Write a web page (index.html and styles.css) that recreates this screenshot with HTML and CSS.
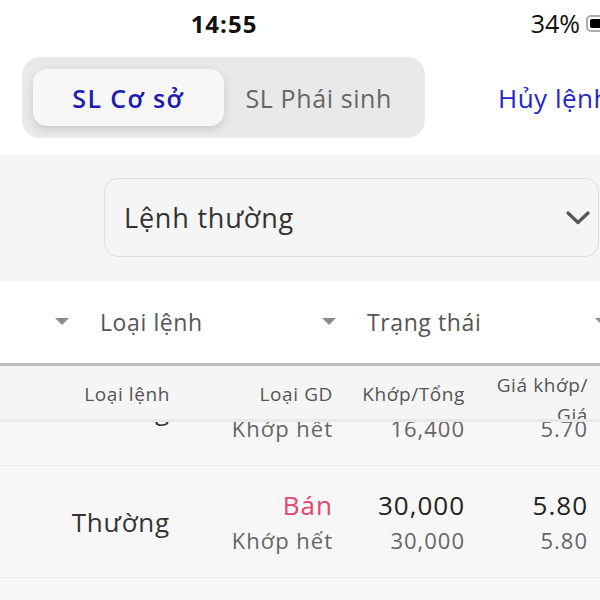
FILE: index.html
```html
<!DOCTYPE html>
<html lang="vi">
<head>
<meta charset="utf-8">
<link rel="stylesheet" href="styles.css">
</head>
<body>
<div class="screen">
  <div class="status">
    <div class="time">14:55</div>
    <div class="battery-area">
      <span class="pct">34%</span>
      <span class="battery"><span class="battery-fill"></span></span>
    </div>
  </div>

  <div class="topbar">
    <div class="segment">
      <div class="seg active">SL Cơ sở</div>
      <div class="seg">SL Phái sinh</div>
    </div>
    <div class="cancel">Hủy lệnh</div>
  </div>

  <div class="filter-section">
    <div class="dropdown">
      <span class="dd-label">Lệnh thường</span>
      <svg class="chev" width="24" height="14" viewBox="0 0 24 14"><path d="M2 2 L12 11.5 L22 2" fill="none" stroke="#555" stroke-width="3.2" stroke-linecap="round" stroke-linejoin="round"/></svg>
    </div>
  </div>

  <div class="filter-row">
    <span class="caret c1"></span>
    <span class="f-label l1">Loại lệnh</span>
    <span class="caret c2"></span>
    <span class="f-label l2">Trạng thái</span>
    <span class="caret c3"></span>
  </div>

  <div class="thead">
    <div class="th col1">Loại lệnh</div>
    <div class="th col2">Loại GD</div>
    <div class="th col3">Khớp/Tổng</div>
    <div class="th col4 two">Giá khớp/<br>Giá</div>
  </div>

  <div class="tbody">
    <div class="row first">
      <div class="col1 type">Thường</div>
      <div class="col2 cell"><span class="main buy">Mua</span><span class="sub">Khớp hết</span></div>
      <div class="col3 cell"><span class="main">16,400</span><span class="sub">16,400</span></div>
      <div class="col4 cell"><span class="main">5.70</span><span class="sub">5.70</span></div>
    </div>
    <div class="row">
      <div class="col1 type">Thường</div>
      <div class="col2 cell"><span class="main sell">Bán</span><span class="sub">Khớp hết</span></div>
      <div class="col3 cell"><span class="main">30,000</span><span class="sub">30,000</span></div>
      <div class="col4 cell"><span class="main">5.80</span><span class="sub">5.80</span></div>
    </div>
  </div>
</div>
</body>
</html>
```

FILE: styles.css
```css
* { box-sizing: border-box; }
html, body { margin: 0; padding: 0; }
body {
  width: 600px;
  height: 600px;
  overflow: hidden;
  background: #f7f7f7;
  font-family: "Open Sans", "Noto Sans", sans-serif;
  color: #333;
}
.screen { width: 600px; height: 600px; overflow: hidden; display: flex; flex-direction: column; }

.status {
  height: 46px;
  flex: none;
  background: #fff;
  display: flex;
  align-items: center;
}
.time {
  width: 448px;
  text-align: center;
  font-weight: 700;
  font-size: 24px;
  color: #111;
  letter-spacing: 1px;
}
.battery-area {
  margin-left: auto;
  display: flex;
  align-items: center;
  gap: 6px;
}
.pct {
  font-size: 25px;
  color: #111;
}
.battery {
  width: 26px;
  height: 17px;
  border: 2px solid #aaa;
  border-radius: 5px;
  padding: 2px;
  margin-right: -12px;
  display: flex;
}
.battery-fill { flex: 1; background: #000; border-radius: 2px; }

.topbar {
  height: 109px;
  flex: none;
  background: #fff;
  display: flex;
  align-items: flex-start;
  padding-top: 11px;
}
.segment {
  margin-left: 22px;
  width: 403px;
  height: 81px;
  border-radius: 18px;
  background: #e9e9e9;
  display: flex;
  align-items: center;
  padding: 0 11px;
}
.seg {
  width: 192px;
  height: 57px;
  display: flex;
  align-items: center;
  justify-content: center;
  font-size: 25px;
  letter-spacing: 0.6px;
  color: #666;
}
.seg.active {
  background: #f7f7f7;
  border-radius: 14px;
  box-shadow: 0 3px 8px rgba(0,0,0,0.14);
  color: #1c1cb0;
  font-weight: 600;
  letter-spacing: 1.4px;
}
.cancel {
  margin-left: 73px;
  margin-top: 23px;
  font-size: 26px;
  letter-spacing: 0.5px;
  color: #2326c8;
  white-space: nowrap;
}

.filter-section {
  height: 126px;
  flex: none;
  background: #f5f5f5;
  padding: 23px 0 0 104px;
}
.dropdown {
  width: 495px;
  height: 79px;
  border: 1.5px solid #dcdcdc;
  border-radius: 14px;
  display: flex;
  align-items: center;
  padding: 0 8px 0 19px;
}
.dd-label { font-size: 27px; letter-spacing: 0.8px; color: #333; }
.chev { margin-left: auto; }

.filter-row {
  height: 85px;
  flex: none;
  background: #fff;
  border-bottom: 3px solid #bcbcbc;
  display: flex;
  align-items: center;
}
.caret {
  width: 0; height: 0;
  border-left: 7px solid transparent;
  border-right: 7px solid transparent;
  border-top: 7px solid #8a8a96;
  margin-top: -2px;
}
.c1 { margin-left: 55px; }
.l1 { margin-left: 31px; width: 222px; }
.l2 { margin-left: 31px; }
.c3 { margin-left: auto; margin-right: -9px; }
.f-label { font-size: 23px; letter-spacing: 0.6px; color: #555; }

.thead {
  height: 53px;
  flex: none;
  background: #f5f5f5;
  display: flex;
  align-items: center;
  font-size: 19px;
  letter-spacing: 0.6px;
  color: #555;
  padding-top: 3px;
}
.th.two {
  line-height: 30px;
  align-self: flex-start;
  margin-top: 1px;
}
.col1 { width: 200px; padding-right: 30px; text-align: right; white-space: nowrap; }
.col2 { width: 133px; text-align: right; white-space: nowrap; }
.col3 { width: 132px; text-align: right; white-space: nowrap; }
.col4 { width: 123px; text-align: right; white-space: nowrap; }

.tbody {
  flex: 1;
  overflow: hidden;
  border-top: 3px solid #e8e8e8;
}
.row {
  height: 112px;
  display: flex;
  align-items: center;
  border-bottom: 1.5px solid #ececec;
  background: #f7f7f7;
}
.row.first { margin-top: -68px; }
.type { font-size: 26px; letter-spacing: 0.8px; color: #333; }
.cell { display: flex; flex-direction: column; align-items: flex-end; gap: 2px; }
.main { font-size: 26px; letter-spacing: 1px; color: #222; line-height: 34px; }
.sub { font-size: 22px; letter-spacing: 1px; color: #666; line-height: 32px; }
.sell { color: #e5456c; }
.buy { color: #1fa86a; }
```
